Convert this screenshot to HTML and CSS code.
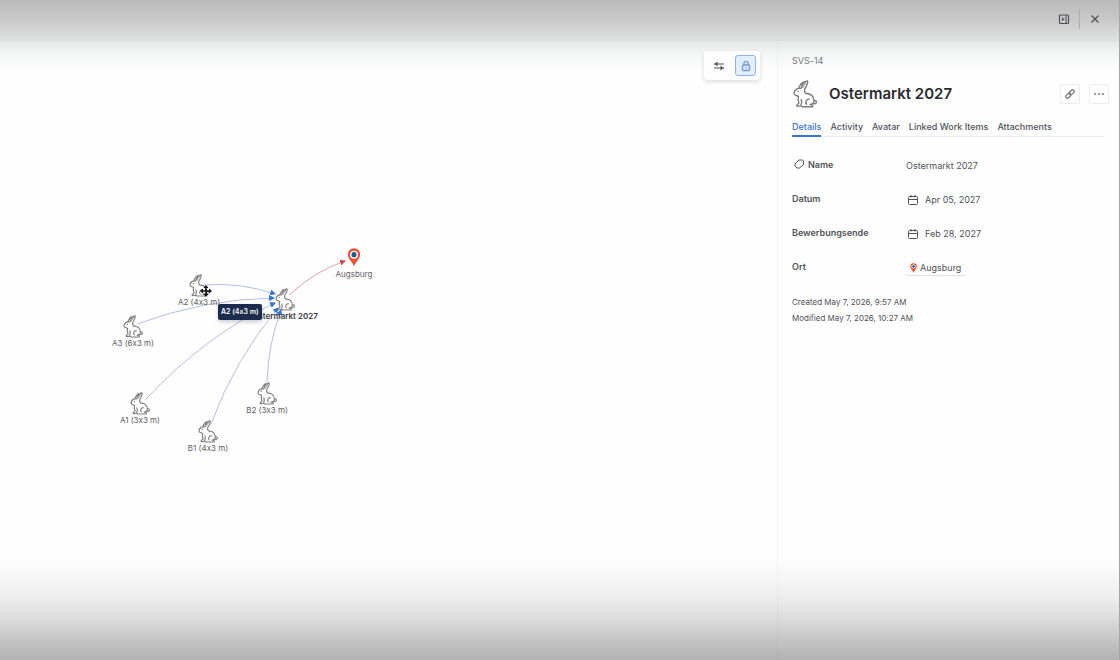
FILE: index.html
```
<!DOCTYPE html>
<html lang="en">
<head>
<meta charset="UTF-8" />
<meta name="viewport" content="width=device-width, initial-scale=1" />
<title>Ostermarkt 2027</title>
<link rel="stylesheet" href="styles.css">
</head>
<body>

<!-- shared drawings -->
<svg class="defs" width="0" height="0" aria-hidden="true">
  <symbol id="bunny" viewBox="0 0 26 28">
    <path d="M9 8.500C10 5 12 1.500 15 1C16.500 1 15.500 5 12.500 9.500M6.500 8.500C8 5 9.500 2.500 12 2M9 8.500C6 8 3.500 9 2.500 11.500C1.500 14 2.500 15 4.500 15.500L6.500 16.500C5.500 19 6 21 7 23L4.500 25.500C5 26.800 7 26.500 8.500 25.500L10.500 26.800H20.500C21.500 25 20 24.500 18 24.500C20 24.300 21.800 23.500 22 21C22 16 18.500 13.500 14.500 13.500C13 13.500 12.500 12 12.500 9.500M22 20.500C24.500 20 25.300 22.500 23.500 23.500C22.500 24 21.500 23.500 21.500 23.500M9 19C10 21 10 23 9 25M15 24.500C12.500 23 14 19 17.500 19" fill="#fff" stroke="#7d7d7d" stroke-width="1.400" stroke-linejoin="round"/>
    <path d="M10.500 8C11.500 5.500 12.500 4 14 2.800" fill="none" stroke="#a5a5a5" stroke-width="1.400"/>
    <circle cx="6" cy="11.500" r=".7" fill="#666"/>
  </symbol>
  <symbol id="pin" viewBox="0 0 14 20">
    <path d="M7 19.500C5.500 14.500 .5 11.500 .5 6.800A6.500 6.500 0 0 1 13.500 6.800C13.500 11.500 8.500 14.500 7 19.500Z" fill="#e8502f"/>
    <circle cx="7" cy="7" r="4.200" fill="#fff"/>
    <circle cx="7" cy="7" r="2.700" fill="#1f5796"/>
  </symbol>
  <symbol id="calendar" viewBox="0 0 12 12">
    <path d="M2.500 2.500h7a1 1 0 0 1 1 1v6a1 1 0 0 1-1 1h-7a1 1 0 0 1-1-1v-6a1 1 0 0 1 1-1zM1.500 5.500h9M4 1v2.500M8 1v2.500" fill="none" stroke="currentColor"/>
  </symbol>
</svg>

<header class="topbar">
  <button class="icon-btn" type="button" aria-label="Toggle panel">
    <svg width="12" height="12" viewBox="0 0 12 12"><rect x="1.500" y="2" width="9" height="8.500" rx="1" fill="none" stroke="currentColor" stroke-width="1.200"/><path d="M8 2v8.500" stroke="currentColor"/><path d="M4 4.200v4l2.500-2z" fill="currentColor"/></svg>
  </button>
  <span class="divider"></span>
  <button class="icon-btn" type="button" aria-label="Close">
    <svg width="12" height="12" viewBox="0 0 12 12"><path d="M2.500 2.500l7 7M9.500 2.500l-7 7" stroke="currentColor" stroke-width="1.300"/></svg>
  </button>
</header>

<div class="content">
  <main class="canvas">
    <svg class="edges" width="420" height="480" viewBox="0 42 420 480" fill="none" aria-hidden="true">
      <defs>
        <marker id="arrow" viewBox="0 0 6 6" refX="5" refY="3" markerWidth="6" markerHeight="6" orient="auto" markerUnits="userSpaceOnUse"><path d="M0 0l6 3-6 3z" fill="#3474d9"/></marker>
        <marker id="arrow-red" viewBox="0 0 6 6" refX="5" refY="3" markerWidth="6" markerHeight="6" orient="auto" markerUnits="userSpaceOnUse"><path d="M0 0l6 3-6 3z" fill="#cb4658"/></marker>
      </defs>
      <g stroke="#b2bee9" marker-end="url(#arrow)">
        <path d="M203 286Q240 283 275 295" marker-end="url(#arrow)"/>
        <path d="M137 325Q205 300 274 299" marker-end="url(#arrow)"/>
        <path d="M145 401Q207 335 275 304" marker-end="url(#arrow)"/>
        <path d="M211 425Q235 360 278 309" marker-end="url(#arrow)"/>
        <path d="M267 383Q268 346 281 311" marker-end="url(#arrow)"/>
      </g>
      <path d="M289 296Q315 272 345 262" stroke="#e0a2aa" marker-end="url(#arrow-red)"/>
    </svg>

    <div class="node main-node"><svg width="22" height="23"><use href="#bunny"/></svg><span>Ostermarkt 2027</span></div>
    <div class="node place"><svg width="14" height="19"><use href="#pin"/></svg><span>Augsburg</span></div>
    <div class="node a2"><svg width="22" height="23"><use href="#bunny"/></svg><span>A2 (4x3 m)</span></div>
    <div class="node a3"><svg width="22" height="23"><use href="#bunny"/></svg><span>A3 (6x3 m)</span></div>
    <div class="node a1"><svg width="22" height="23"><use href="#bunny"/></svg><span>A1 (3x3 m)</span></div>
    <div class="node b1"><svg width="22" height="23"><use href="#bunny"/></svg><span>B1 (4x3 m)</span></div>
    <div class="node b2"><svg width="22" height="23"><use href="#bunny"/></svg><span>B2 (3x3 m)</span></div>

    <div class="tooltip" role="tooltip">A2 (4x3 m)</div>
    <svg class="cursor" width="12" height="12" viewBox="0 0 12 12" aria-hidden="true"><path d="M6 0l2.500 3H6.800v2.200H9V3.500L12 6 9 8.500V6.800H6.800V9h1.700L6 12 3.500 9h1.700V6.800H3v1.700L0 6l3-2.500v1.700h2.200V3H3.500z" fill="#151515"/></svg>

    <div class="toolbar">
      <button type="button" aria-label="Filter">
        <svg width="12" height="10" viewBox="0 0 12 10"><path d="M1 3h10M1 7h10" stroke="currentColor"/><path d="M4.500 .5v5L1.500 3zM7.500 4.500v5L10.500 7z" fill="currentColor"/></svg>
      </button>
      <button class="active" type="button" aria-label="Lock layout">
        <svg width="10" height="12" viewBox="0 0 10 12" fill="none" stroke="currentColor" stroke-width="1.300"><rect x="1.500" y="5" width="7" height="5.500" rx="1"/><path d="M3 5V3.300a2 2 0 0 1 4 0V5M5 7v1.500"/></svg>
      </button>
    </div>
  </main>

  <aside class="panel">
    <div class="key">SVS-14</div>
    <div class="title-row">
      <svg class="avatar" width="26" height="28"><use href="#bunny"/></svg>
      <h1>Ostermarkt 2027</h1>
      <button class="box-btn" type="button" aria-label="Copy link">
        <svg width="10" height="10" viewBox="0 0 12 12" fill="none" stroke="currentColor" stroke-width="1.500"><rect x="4.500" y="2" width="7" height="4" rx="2" transform="rotate(-45 8 4)"/><rect x=".5" y="6" width="7" height="4" rx="2" transform="rotate(-45 4 8)"/></svg>
      </button>
      <button class="box-btn" type="button" aria-label="More">
        <svg width="12" height="12" viewBox="0 0 12 12" fill="currentColor"><circle cx="2" cy="6" r="1"/><circle cx="6" cy="6" r="1"/><circle cx="10" cy="6" r="1"/></svg>
      </button>
    </div>

    <nav class="tabs">
      <a class="current" href="#details">Details</a>
      <a href="#activity">Activity</a>
      <a href="#avatar">Avatar</a>
      <a href="#linked">Linked Work Items</a>
      <a href="#attachments">Attachments</a>
    </nav>

    <dl class="fields" id="details">
      <dt class="name"><svg width="10" height="10" viewBox="0 0 10 10"><path d="M5 1h3.500L9.500 2v3.500L5.500 9H3L1 7V5z" fill="none" stroke="currentColor" stroke-linejoin="round"/></svg>Name</dt>
      <dd>Ostermarkt 2027</dd>
      <dt>Datum</dt>
      <dd class="date"><svg width="12" height="12"><use href="#calendar"/></svg>Apr 05, 2027</dd>
      <dt>Bewerbungsende</dt>
      <dd class="date"><svg width="12" height="12"><use href="#calendar"/></svg>Feb 28, 2027</dd>
      <dt>Ort</dt>
      <dd><a class="chip" href="#augsburg"><svg width="7" height="10"><use href="#pin"/></svg>Augsburg</a></dd>
    </dl>

    <p class="stamp">Created May 7, 2026, 9:57 AM</p>
    <p class="stamp">Modified May 7, 2026, 10:27 AM</p>
  </aside>
</div>

</body>
</html>
```
FILE: styles.css
```
* {
  box-sizing: border-box;
}
body {
  font-family: Inter, sans-serif;
  font-size: 9px;
  line-height: 12px;
  font-variant-ligatures: no-contextual;
  margin: 0;
  min-height: 100vh;
  display: flex;
  flex-direction: column;
  color: #505258;
  background:
    linear-gradient(to top, #b2b2b2 0, #c5c5c5 20px, #dfdfdf 45px, #efefef 65px, rgba(255, 255, 255, 0) 100px),
    linear-gradient(#e5e6e6 41px, #f3f4f4 53px, #fefefe 70px);
  border-right: 1px solid #a5a5a5;
}
svg {
  display: block;
  flex: none;
}
button {
  display: flex;
  align-items: center;
  justify-content: center;
  padding: 0;
  border: none;
  background: none;
  color: inherit;
  cursor: pointer;
}
a {
  color: inherit;
  text-decoration: none;
}
.defs {
  position: absolute;
}

/* top bar */
.topbar {
  height: 41px;
  display: flex;
  align-items: center;
  justify-content: flex-end;
  padding: 0 12px 3px 0;
  background: linear-gradient(#bbb, #c9c9c9 50%, #dfe0e0);
  border-bottom: 1px solid #dadddd;
}
.icon-btn {
  width: 24px;
  height: 24px;
}
.divider {
  width: 1px;
  height: 20px;
  margin: 0 3px;
  background: #b0b0b0;
}

.content {
  flex: 1;
  display: flex;
}

/* graph */
.canvas {
  flex: 1;
  position: relative;
}
.edges {
  position: absolute;
  left: 0;
  top: 0;
}
.node {
  position: absolute;
  width: 100px;
  display: flex;
  flex-direction: column;
  align-items: center;
  color: #5e6066;
  font-size: 8px;
  transform: translateX(-50%);
}
.node span {
  line-height: 10px;
}
.main-node { left: 285px; top: 247px; }
.main-node span {
  font-weight: 600;
  color: #35383f;
}
.place { left: 354px; top: 207px; }
.place span { margin-top: 2px; }
.a2 { left: 199px; top: 233px; }
.a3 { left: 133px; top: 274px; }
.a1 { left: 140px; top: 351px; }
.b1 { left: 208px; top: 379px; }
.b2 { left: 267px; top: 341px; }
.tooltip {
  position: absolute;
  left: 218px;
  top: 263px;
  padding: 2px 3px;
  border-radius: 2px;
  background: #1b2b4e;
  color: #fff;
  font-size: 7px;
  font-weight: 600;
  box-shadow: 0 2px 4px #0003;
}
.cursor {
  position: absolute;
  left: 200px;
  top: 244px;
}
.toolbar {
  position: absolute;
  right: 17px;
  top: 10px;
  display: flex;
  gap: 6px;
  padding: 4px;
  border-radius: 3px;
  background: #fdfdfd;
  box-shadow: 0 2px 5px #0002;
}
.toolbar button {
  width: 21px;
  height: 21px;
  border-radius: 3px;
}
.toolbar .active {
  background: #e2edfd;
  border: 1px solid #8fb2e8;
  color: #6f98df;
}

/* details panel */
.panel {
  width: 342px;
  padding: 14px 10px 0 14px;
  border-left: 1px solid #0000000b;
}
.key {
  color: #77797e;
}
.title-row {
  display: flex;
  align-items: center;
  margin-top: 13px;
}
.title-row h1 {
  flex: 1;
  margin: 0 0 0 11px;
  font-size: 15px;
  line-height: 24px;
  font-weight: 600;
  color: #2b2c30;
}
.box-btn {
  width: 20px;
  height: 20px;
  margin-left: 9px;
  border: 1px solid #ebebeb;
  border-radius: 2px;
  color: #77797e;
}
.tabs {
  display: flex;
  gap: 9px;
  margin: 13px 5px 0 0;
  border-bottom: 1px solid #ececee;
  font-weight: 500;
}
.tabs a {
  padding-bottom: 2px;
}
.tabs .current {
  color: #3b73d1;
  border-bottom: 2px solid #3b73d1;
  margin-bottom: -1px;
}
.fields {
  display: grid;
  grid-template-columns: 114px 1fr;
  grid-auto-rows: 34px;
  margin: 12px 0 0;
}
.fields dt {
  padding-top: 10px;
  font-weight: 600;
}
.fields dd {
  display: flex;
  align-items: center;
  margin: 0;
}
.fields .name {
  display: flex;
  gap: 4px;
  padding-left: 2px;
}
.fields .date {
  gap: 6px;
  padding-left: 1px;
}
.chip {
  display: flex;
  align-items: center;
  gap: 3px;
  padding: 1px 4px;
  border-radius: 2px;
  box-shadow: 0 1px 1px #0002;
}
.stamp {
  margin: 0 0 4px;
  font-size: 8px;
}
.fields + .stamp {
  margin-top: 11px;
}
```
